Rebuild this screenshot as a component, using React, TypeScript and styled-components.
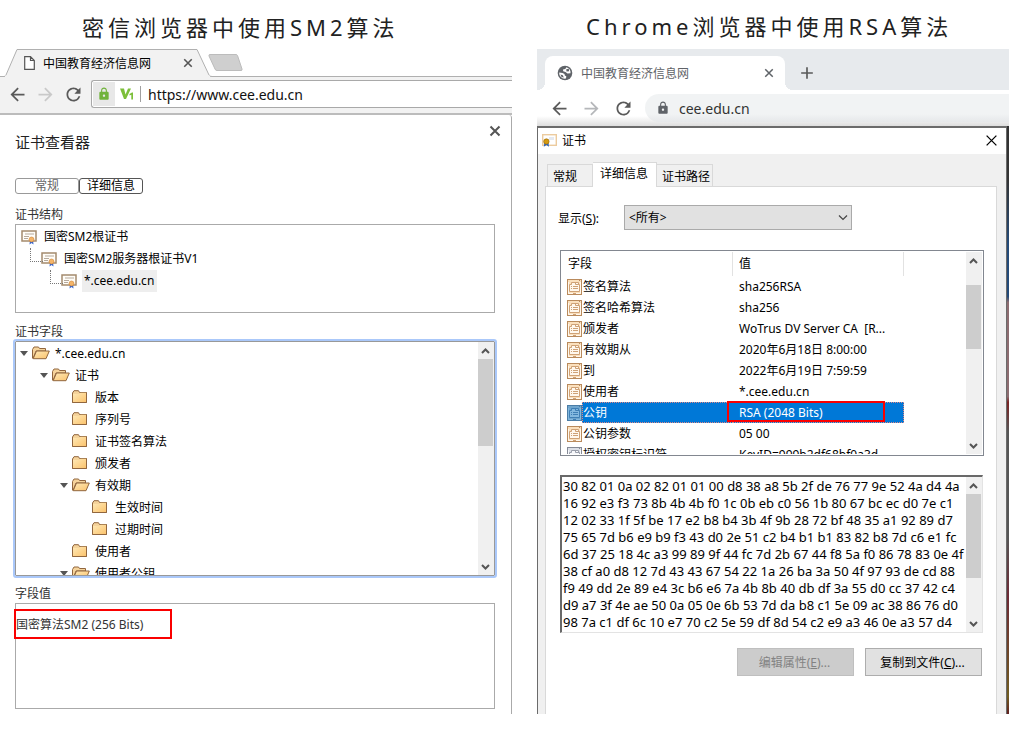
import React from "react";
import styled, { createGlobalStyle, css } from "styled-components";
import { MdArrowBack, MdArrowForward, MdRefresh, MdLock, MdAdd } from "react-icons/md";

const GlobalStyle = createGlobalStyle`
  * { box-sizing: border-box; }
  body { margin: 0; background: #fff; }
  body, button, input, select, textarea {
    font-family: "Noto Sans", "Noto Sans CJK SC", sans-serif;
    font-size: 12px;
    color: #000;
  }
  svg { display: block; flex: none; }
`;

const Page = styled.main`
  display: grid;
  grid-template-columns: minmax(0, 512fr) minmax(0, 472fr);
  column-gap: 25px;
  overflow: hidden;
`;

const Column = styled.section``;

const Heading = styled.h1<{ $indent: number; $top: number }>`
  margin: 0;
  height: 49px;
  padding: ${(p) => p.$top}px 0 0 ${(p) => p.$indent}px;
  font-size: 22px;
  line-height: 34px;
  font-weight: 400;
  letter-spacing: 4px;
  color: #222;
  white-space: nowrap;
`;

const IconButton = styled.button<{ $w?: number; $h?: number; $color?: string }>`
  display: flex;
  align-items: center;
  justify-content: center;
  flex: none;
  width: ${(p) => p.$w ?? 28}px;
  height: ${(p) => p.$h ?? 28}px;
  padding: 0;
  border: 0;
  background: none;
  color: ${(p) => p.$color ?? "#5a5a5a"};
`;

/* ---------- left browser ---------- */

const OldTabStrip = styled.div`
  display: flex;
  height: 28px;
  background: #fff;
  box-shadow: inset 0 -1px #b0b0b0;
`;

const OldTab = styled.div`
  position: relative;
  display: flex;
  align-items: center;
  width: 212px;
  padding: 0 14px 0 24px;
  font-size: 12px;
  & > span { flex: 1; margin-left: 8px; }
`;

const TabShape = styled.svg`
  position: absolute;
  inset: 0;
  z-index: -1;
`;

const OldTabWrap = styled.div`
  isolation: isolate;
  display: flex;
  margin-right: -4px;
`;

const OldToolbar = styled.div`
  display: flex;
  align-items: center;
  height: 38px;
  padding: 0 0 2px 3px;
  background: #f2f2f2;
  border-bottom: 2px solid #bcbcbc;
`;

const OldAddress = styled.label`
  display: flex;
  align-items: center;
  flex: 1;
  height: 28px;
  margin-left: 4px;
  padding-left: 1px;
  background: #fff;
  border: 1px solid #a9a9a9;
  border-right: 0;
  border-radius: 3px 0 0 3px;
`;

const LockBadge = styled.span`
  display: flex;
  align-items: center;
  justify-content: center;
  width: 22px;
  height: 24px;
  margin-right: 5px;
  background: #e8e8e8;
  color: #71b33c;
`;

const BadgeRule = styled.span`
  width: 1px;
  height: 16px;
  margin: 0 7px 0 6px;
  background: #a0a0a0;
`;

const AddressInput = styled.input<{ $size: number; $color: string }>`
  flex: 1;
  min-width: 0;
  padding: 0;
  border: 0;
  outline: 0;
  background: none;
  font-size: ${(p) => p.$size}px;
  color: ${(p) => p.$color};
`;

const Viewer = styled.div`
  min-height: 599px;
  padding: 10px 16px 5px 15px;
  border-right: 1px solid #aaa;
  border-top-right-radius: 3px;
`;

const ViewerHead = styled.header`
  display: flex;
  align-items: flex-start;
  justify-content: space-between;
  height: 53px;
  margin-right: -6px;
`;

const ViewerTitle = styled.h2`
  margin: 6px 0 0;
  font-size: 15px;
  line-height: 22px;
  font-weight: 400;
  color: #222;
`;

const PillTabs = styled.div`
  display: flex;
`;

const PillTab = styled.button<{ $active?: boolean }>`
  width: 64px;
  height: 16px;
  padding: 0;
  line-height: 14px;
  background: #fff;
  border: 1px solid ${(p) => (p.$active ? "#555" : "#999")};
  border-radius: 3px;
  color: ${(p) => (p.$active ? "#000" : "#666")};
`;

const FieldLabel = styled.h3<{ $gap: number }>`
  margin: ${(p) => p.$gap}px 0 0;
  padding-top: 1px;
  font-size: 12px;
  line-height: 20px;
  height: 20px;
  font-weight: 400;
  color: #333;
`;

const ChainBox = styled.ul`
  height: 89px;
  margin: 0;
  padding: 1px 0 0 5px;
  list-style: none;
  border: 1px solid #aaa;
`;

const ChainItem = styled.li<{ $level: number }>`
  position: relative;
  display: flex;
  align-items: center;
  height: 22px;
  margin-left: ${(p) => p.$level * 20}px;
  ${(p) =>
    p.$level > 0 &&
    css`
      &::before {
        content: "";
        position: absolute;
        left: -11px;
        top: 0;
        width: 12px;
        height: 13px;
        border: dotted #777;
        border-width: 0 0 1px 1px;
      }
    `}
`;

const ChainText = styled.span<{ $selected?: boolean }>`
  height: 22px;
  margin-left: 4px;
  padding: 0 3px 0 2px;
  line-height: 22px;
  background: ${(p) => (p.$selected ? "#eee" : "transparent")};
`;

const TreeBox = styled.div`
  display: flex;
  height: 235px;
  overflow: hidden;
  border: 1px solid #999;
  outline: 2px solid #aac8fa;
  border-radius: 1px;
`;

const TreeList = styled.ul`
  flex: 1;
  margin: 0;
  padding: 0 0 0 2px;
  list-style: none;
`;

const TreeItem = styled.li<{ $level: number }>`
  display: flex;
  align-items: center;
  height: 22px;
  margin-left: ${(p) => p.$level * 20}px;
`;

const Twisty = styled.span<{ $open: boolean }>`
  width: 7px;
  margin: 0 4px 0 2px;
  border: solid transparent;
  border-width: 5px 4px 0;
  border-top-color: ${(p) => (p.$open ? "#555" : "transparent")};
`;

const TreeText = styled.span`
  margin-left: 5px;
`;

const ValueWrap = styled.div`
  position: relative;
`;

const ValueArea = styled.textarea`
  display: block;
  width: 100%;
  height: 106px;
  padding: 11px 0 0;
  border: 1px solid #aaa;
  outline: 0;
  resize: none;
  line-height: 20px;
  color: #333;
`;

const RedFrame = styled.span<{ $left: number; $top: number; $w: number; $h: number }>`
  position: absolute;
  left: ${(p) => p.$left}px;
  top: ${(p) => p.$top}px;
  width: ${(p) => p.$w}px;
  height: ${(p) => p.$h}px;
  border: 2px solid #fa0000;
  pointer-events: none;
`;

/* ---------- scroll bar ---------- */

const ScrollTrack = styled.div`
  display: flex;
  flex-direction: column;
  flex: none;
  width: 16px;
  background: #f0f0f0;
`;

const ScrollThumb = styled.div<{ $offset: number; $h: number }>`
  width: 15px;
  height: ${(p) => p.$h}px;
  margin: ${(p) => p.$offset}px 0 auto;
  background: #cdcdcd;
`;

function Chevron({ up }: { up?: boolean }) {
  return (
    <svg width="15" height="17" viewBox="0 0 15 17" fill="none" stroke="#555" strokeWidth="2">
      <path d={up ? "M4 11 L7.500 7.500 L11 11" : "M4 7 L7.500 10.500 L11 7"} />
    </svg>
  );
}

function ScrollBar({ offset, size }: { offset: number; size: number }) {
  return (
    <ScrollTrack aria-hidden>
      <Chevron up />
      <ScrollThumb $offset={offset} $h={size} />
      <Chevron />
    </ScrollTrack>
  );
}

/* ---------- right browser ---------- */

const ChromeStrip = styled.div`
  display: flex;
  align-items: flex-end;
  height: 41px;
  padding-left: 8px;
  background: #e7eaed;
`;

const ChromeTab = styled.div`
  position: relative;
  display: flex;
  align-items: center;
  width: 240px;
  height: 34px;
  padding: 0 9px 0 12px;
  background: #fff;
  border-radius: 8px 8px 0 0;
  color: #5f6368;
  & > span { flex: 1; margin-left: 8px; }
  &::before, &::after {
    content: "";
    position: absolute;
    bottom: 0;
    width: 8px;
    height: 8px;
  }
  &::before {
    left: -8px;
    background: radial-gradient(circle at 0 0, transparent 8px, #fff 8px);
  }
  &::after {
    right: -8px;
    background: radial-gradient(circle at 100% 0, transparent 8px, #fff 8px);
  }
`;

const ChromeBar = styled.div`
  display: flex;
  align-items: center;
  height: 36px;
  padding-left: 6px;
  background: linear-gradient(#fff 26px, #dedede);
`;

const ChromeAddress = styled.label`
  display: flex;
  align-items: center;
  flex: 1;
  height: 28px;
  margin-left: 6px;
  padding-left: 11px;
  gap: 9px;
  background: linear-gradient(#f1f3f4 20px, #e6e8ea);
  border-radius: 14px 0 0 14px;
  color: #5f6368;
`;

const DialogBack = styled.div`
  padding-right: 2px;
  background: linear-gradient(#333 0 9%, #244a78 20%, #244a78 29%, #8c6c70 30%, #8c6c70 46%, #7a2424 47%, #555 52%, #555 70%, #6c2a35 80%, #705c20 97%, #602020);
`;

const Dialog = styled.div`
  height: 588px;
  border: solid #6b6b6b;
  border-width: 2px 1px 0;
  background: #f0f0f0;
`;

const DialogTitle = styled.header`
  display: flex;
  align-items: center;
  height: 26px;
  padding: 0 2px 2px 4px;
  background: #fff;
  & > span { flex: 1; margin-left: 5px; }
`;

const DialogTabs = styled.div`
  display: flex;
  align-items: flex-end;
  height: 32px;
  padding: 0 9px;
`;

const DialogTab = styled.button<{ $active?: boolean; $w: number }>`
  position: relative;
  width: ${(p) => p.$w}px;
  height: ${(p) => (p.$active ? 25 : 22)}px;
  margin-bottom: ${(p) => (p.$active ? -1 : 0)}px;
  padding: 0 0 ${(p) => (p.$active ? 4 : 0)}px ${(p) => (p.$active ? 7 : 5)}px;
  text-align: left;
  background: ${(p) => (p.$active ? "#fff" : "#f0f0f0")};
  border: 1px solid #d9d9d9;
  border-bottom: 0;
  & + & { border-left-width: ${(p) => (p.$active ? 1 : 0)}px; }
`;

const TabPage = styled.div`
  height: 528px;
  margin: 0 9px 0 7px;
  padding: 18px 12px 0 14px;
  background: #fff;
  border: 1px solid #d9d9d9;
  border-bottom: 0;
`;

const ShowRow = styled.div`
  display: flex;
  align-items: center;
  & > label { width: 66px; margin-left: -2px; }
`;

const SelectWrap = styled.div`
  position: relative;
  width: 228px;
  & > svg { position: absolute; right: 4px; top: 8px; pointer-events: none; }
`;

const Select = styled.select`
  appearance: none;
  width: 100%;
  height: 25px;
  padding: 0 4px;
  background: #e1e1e1;
  border: 1px solid #aaa;
  border-radius: 0;
`;

const ListBox = styled.div`
  display: flex;
  height: 206px;
  margin-top: 20px;
  padding: 1px;
  border: 1px solid #828790;
`;

const ListView = styled.div`
  flex: 1;
  overflow: hidden;
`;

const FieldTable = styled.table`
  width: 100%;
  table-layout: fixed;
  border-collapse: separate;
  border-spacing: 0;
  th {
    height: 24px;
    padding: 0 6px 2px;
    text-align: left;
    font-weight: 400;
    border-right: 1px solid #e2e2e2;
  }
  th:last-child { border-right: 0; }
  td {
    height: 21px;
    padding: 0;
    line-height: 20px;
    white-space: nowrap;
  }
`;

const NameCell = styled.div`
  display: flex;
  align-items: center;
  height: 21px;
  padding-left: 5px;
`;

const NameText = styled.span<{ $selected: boolean }>`
  flex: 1;
  height: 21px;
  padding-left: 1px;
  line-height: 21px;
  ${(p) => p.$selected && css`background: #0078d7; color: #fff; border: 1px dotted #d88; border-right: 0; padding-left: 0; line-height: 19px;`}
`;

const ValueCell = styled.div<{ $selected: boolean }>`
  position: relative;
  height: 21px;
  padding-left: 6px;
  line-height: 21px;
  ${(p) => p.$selected && css`background: #0078d7; color: #fff; border: 1px dotted #d88; border-left: 0; line-height: 19px;`}
`;

const HexBox = styled.div`
  display: flex;
  height: 158px;
  margin: 19px 1px 0 0;
  border: solid #e3e3e3;
  border-width: 2px 1px 1px 2px;
  border-top-color: #696969;
  border-left-color: #696969;
`;

const HexText = styled.textarea`
  flex: 1;
  min-width: 0;
  padding: 1px 0 0 1px;
  border: 0;
  outline: 0;
  resize: none;
  overflow: hidden;
  white-space: pre;
  font-size: 13px;
  line-height: 17px;
`;

const ButtonRow = styled.div`
  display: flex;
  justify-content: flex-end;
  gap: 11px;
  margin: 15px 2px 0 0;
`;

const PushButton = styled.button`
  width: 117px;
  height: 28px;
  padding: 0 2px 1px 0;
  background: #e1e1e1;
  border: 1px solid #adadad;
  &:disabled { background: #ccc; border-color: #bfbfbf; color: #838383; }
`;

/* ---------- drawings ---------- */

function Cross({ size, width, color }: { size: number; width: number; color: string }) {
  return (
    <svg width={size} height={size} viewBox="0 0 12 12" stroke={color} strokeWidth={width}>
      <path d="M1.500 1.500 L10.500 10.500 M10.500 1.500 L1.500 10.500" />
    </svg>
  );
}

function PageIcon() {
  return (
    <svg width="11" height="14" viewBox="0 0 11 14" fill="#fff" stroke="#555" strokeWidth="1.200">
      <path d="M0.700 0.700 H6.500 L10.300 4.500 V13.300 H0.700 Z M6.500 0.700 V4.500 H10.300" />
    </svg>
  );
}

function GlobeIcon() {
  return (
    <svg width="16" height="16" viewBox="0 0 16 16">
      <circle cx="8" cy="8" r="7.300" fill="#5f6368" />
      <path d="M9.500 2.300 L8.300 4 L6 4.500 L6.200 6.300 L8.500 7 L10.500 8.500 L13.500 8.200 C13.900 5.500 12.400 3.200 9.500 2.300 Z" fill="#fff" />
      <path d="M2.200 7.600 L5.500 8 L7.500 9 L7.800 10.500 L9.300 11.200 L9 13.600 C5 14.200 2 11.500 2.200 7.600 Z" fill="#fff" />
      <path d="M9.200 4.200 L11.800 3.800 L12.200 6.200 L9.500 6.400 Z M3.400 9.600 L5.800 10.200 L6.800 12.400 L4.600 12 Z" fill="#5f6368" />
    </svg>
  );
}

function BrandMark() {
  return (
    <svg width="14" height="12" viewBox="0 0 14 12" fill="#7cbf3a">
      <path d="M0 0.500 H4 L5.500 6.500 L8 0.500 H11 L6 11 H4 Z" />
      <path d="M9.500 6 L12 4.500 H13 V11.500 H11.300 V6.800 L9.500 7.500 Z" />
    </svg>
  );
}

function CertIcon() {
  return (
    <svg width="17" height="15" viewBox="0 0 17 15">
      <rect x="1" y="1" width="14" height="10" fill="#fffdf8" stroke="#a48a6d" strokeWidth="1.500" />
      <path d="M4 4 H13 M3 6.500 H8 M3 8.500 H7" stroke="#b5a99c" />
      <path d="M9 10 L8.500 14.500 L10.500 13 L12.500 14.500 L12 10" fill="#2f62d0" />
      <circle cx="10.500" cy="9.500" r="2.500" fill="#f4b56a" stroke="#cf8436" strokeWidth="0.600" />
    </svg>
  );
}

function DialogCertIcon() {
  return (
    <svg width="15" height="13" viewBox="0 0 15 13">
      <rect x="0.700" y="0.700" width="13.600" height="10.600" fill="#fff" stroke="#eccb9e" strokeWidth="1.400" />
      <rect x="7" y="3" width="5" height="3" fill="#e5e9f0" />
      <path d="M2.500 8 L1.800 12.800 L4.400 11 L7 12.800 L6.300 8" fill="#2463c6" />
      <circle cx="4.400" cy="7.500" r="2.700" fill="#d59a10" stroke="#936507" strokeWidth="0.600" />
    </svg>
  );
}

function FolderIcon({ open }: { open: boolean }) {
  return (
    <svg width="18" height="14" viewBox="0 0 18 14" stroke="#91663e" strokeLinejoin="round">
      <defs>
        <linearGradient id="folder" x1="0" y1="0" x2="1" y2="1">
          <stop offset="0" stopColor="#ffeab8" />
          <stop offset="1" stopColor="#fbc26b" />
        </linearGradient>
      </defs>
      {open ? (
        <>
          <path d="M0.500 12 V3.500 L2 1 H6.500 L7.500 2.500 H13.500 V5 H4 L1 12.500 Z" fill="#f5d39b" />
          <path d="M1.200 12.700 L4.500 5 H17.300 L14 12.700 Z" fill="url(#folder)" />
        </>
      ) : (
        <>
          <path d="M0.500 3 L2 0.700 H6.500 L7.500 2.500 H14.500 V12.500 H0.500 Z" fill="#f5d39b" />
          <path d="M0.500 4 H7 L8.500 2.800 H14.500 V12.500 H0.500 Z" fill="url(#folder)" stroke="none" />
          <path d="M0.500 3 V12.500 H14.500 V2.500" fill="none" />
        </>
      )}
    </svg>
  );
}

function FieldIcon({ tone }: { tone: "sand" | "blue" | "gray" }) {
  const [line, fill, paper, inner] = {
    sand: ["#b98a5c", "#fbe0bd", "#fff8ee", "#cfa277"],
    blue: ["#4b7da6", "#6fa5cd", "#83b8df", "#3f7fb5"],
    gray: ["#858a96", "#dcdfe6", "#f7f8fb", "#9a9fab"],
  }[tone];
  return (
    <svg width="15" height="16" viewBox="0 0 15 16">
      <rect x="0.500" y="0.500" width="14" height="15" fill={fill} stroke={line} />
      <path d="M1.500 3 V14.500 H13.500 V3" fill="none" stroke={paper} />
      <path d="M12 1.500 H13" stroke={line} />
      <path d="M2.500 5.500 H4.500 V3.500 H11.500 V5.500 H12.500 V12.500 H2.500 Z" fill={paper} stroke={inner} />
      <path d="M8.500 3.500 V5.500 H12 M4 7.500 H5 M6 7.500 H11 M4 9.500 H5 M6 9.500 H11 M6 14.500 H9" fill="none" stroke={inner} />
    </svg>
  );
}

/* ---------- data ---------- */

const treeRows: { level: number; text: string; open?: boolean }[] = [
  { level: 0, text: "*.cee.edu.cn", open: true },
  { level: 1, text: "证书", open: true },
  { level: 2, text: "版本" },
  { level: 2, text: "序列号" },
  { level: 2, text: "证书签名算法" },
  { level: 2, text: "颁发者" },
  { level: 2, text: "有效期", open: true },
  { level: 3, text: "生效时间" },
  { level: 3, text: "过期时间" },
  { level: 2, text: "使用者" },
  { level: 2, text: "使用者公钥", open: true },
];

const chain = ["国密SM2根证书", "国密SM2服务器根证书V1", "*.cee.edu.cn"];

const fields: [string, string][] = [
  ["签名算法", "sha256RSA"],
  ["签名哈希算法", "sha256"],
  ["颁发者", "WoTrus DV Server CA\u00a0 [R..."],
  ["有效期从", "2020年6月18日 8:00:00"],
  ["到", "2022年6月19日 7:59:59"],
  ["使用者", "*.cee.edu.cn"],
  ["公钥", "RSA (2048 Bits)"],
  ["公钥参数", "05 00"],
  ["授权密钥标识符", "KeyID=999b2df68bf0a3d"],
];

const publicKey = [
  "30 82 01 0a 02 82 01 01 00 d8 38 a8 5b 2f de 76 77 9e 52 4a d4 4a",
  "16 92 e3 f3 73 8b 4b 4b f0 1c 0b eb c0 56 1b 80 67 bc ec d0 7e c1",
  "12 02 33 1f 5f be 17 e2 b8 b4 3b 4f 9b 28 72 bf 48 35 a1 92 89 d7",
  "75 65 7d b6 e9 b9 f3 43 d0 2e 51 c2 b4 b1 b1 83 82 b8 7d c6 e1 fc",
  "6d 37 25 18 4c a3 99 89 9f 44 fc 7d 2b 67 44 f8 5a f0 86 78 83 0e 4f",
  "38 cf a0 d8 12 7d 43 43 67 54 22 1a 26 ba 3a 50 4f 97 93 de cd 88",
  "f9 49 dd 2e 89 e4 3c b6 e6 7a 4b 8b 40 db df 3a 55 d0 cc 37 42 c4",
  "d9 a7 3f 4e ae 50 0a 05 0e 6b 53 7d da b8 c1 5e 09 ac 38 86 76 d0",
  "98 7a c1 df 6c 10 e7 70 c2 5e 59 df 8d 54 c2 e9 a3 46 0e a3 57 d4",
].join("\n");

function NavButtons({ width, dim }: { width: number; dim: string }) {
  return (
    <>
      <IconButton aria-label="后退" $w={width}><MdArrowBack size={21} /></IconButton>
      <IconButton aria-label="前进" $w={width} $color={dim}><MdArrowForward size={21} /></IconButton>
      <IconButton aria-label="刷新" $w={width}><MdRefresh size={21} /></IconButton>
    </>
  );
}

function GmBrowser() {
  return (
    <Column>
      <Heading $indent={82} $top={10}>密信浏览器中使用SM2算法</Heading>
      <OldTabStrip>
        <OldTabWrap>
          <OldTab>
            <TabShape width="212" height="28" viewBox="0 0 212 28">
              <path d="M0 27.500 H4 Q5.500 27.500 6 26 L17 0.500 H197 L209 26 Q210 27.500 212 27.500 V28 H0 Z" fill="#f2f2f2" stroke="#b0b0b0" />
              <path d="M5 27.500 H210" stroke="#f2f2f2" strokeWidth="2" />
            </TabShape>
            <PageIcon />
            <span>中国教育经济信息网</span>
            <IconButton aria-label="关闭标签页" $w={20} $h={20}><Cross size={10} width={1.9} color="#555" /></IconButton>
          </OldTab>
        </OldTabWrap>
        <IconButton aria-label="新标签页" $w={35}>
          <svg width="35" height="18" viewBox="0 0 35 18">
            <path d="M2 0.500 H28 Q29 0.500 29.500 1.500 L34 15 Q34.500 16.500 33 16.500 H9 Q7.500 16.500 7 15 L1 2 Q0.500 0.500 2 0.500 Z" fill="#cfcfcf" stroke="#bcbcbc" />
          </svg>
        </IconButton>
      </OldTabStrip>
      <OldToolbar>
        <NavButtons width={28} dim="#c9c9c9" />
        <OldAddress>
          <LockBadge><MdLock size={14} /></LockBadge>
          <BrandMark />
          <BadgeRule />
          <AddressInput aria-label="地址" readOnly $size={14} $color="#111" value="https://www.cee.edu.cn" />
        </OldAddress>
      </OldToolbar>
      <Viewer>
        <ViewerHead>
          <ViewerTitle>证书查看器</ViewerTitle>
          <IconButton aria-label="关闭" $w={12} $h={12}><Cross size={12} width={2} color="#555" /></IconButton>
        </ViewerHead>
        <PillTabs>
          <PillTab>常规</PillTab>
          <PillTab $active>详细信息</PillTab>
        </PillTabs>
        <FieldLabel $gap={10}>证书结构</FieldLabel>
        <ChainBox>
          {chain.map((text, i) => (
            <ChainItem key={text} $level={i}>
              <CertIcon />
              <ChainText $selected={i === 2}>{text}</ChainText>
            </ChainItem>
          ))}
        </ChainBox>
        <FieldLabel $gap={8}>证书字段</FieldLabel>
        <TreeBox>
          <TreeList>
            {treeRows.map((row) => (
              <TreeItem key={row.text} $level={row.level}>
                <Twisty $open={!!row.open} />
                <FolderIcon open={!!row.open} />
                <TreeText>{row.text}</TreeText>
              </TreeItem>
            ))}
          </TreeList>
          <ScrollBar offset={0} size={87} />
        </TreeBox>
        <FieldLabel $gap={7}>字段值</FieldLabel>
        <ValueWrap>
          <ValueArea aria-label="字段值" readOnly value="国密算法SM2 (256 Bits)" />
          <RedFrame $left={-1} $top={6} $w={158} $h={30} />
        </ValueWrap>
      </Viewer>
    </Column>
  );
}

function ChromeBrowser() {
  return (
    <Column>
      <Heading $indent={49} $top={9}>Chrome浏览器中使用RSA算法</Heading>
      <ChromeStrip>
        <ChromeTab>
          <GlobeIcon />
          <span>中国教育经济信息网</span>
          <IconButton aria-label="关闭标签页" $w={14} $h={14}><Cross size={10} width={1.8} color="#5f6368" /></IconButton>
        </ChromeTab>
        <IconButton aria-label="新标签页" $w={44} $h={34}><MdAdd size={20} /></IconButton>
      </ChromeStrip>
      <ChromeBar>
        <NavButtons width={32} dim="#b5b7ba" />
        <ChromeAddress>
          <MdLock size={14} />
          <AddressInput aria-label="地址" readOnly $size={14} $color="#333" value="cee.edu.cn" />
        </ChromeAddress>
      </ChromeBar>
      <DialogBack>
        <Dialog>
          <DialogTitle>
            <DialogCertIcon />
            <span>证书</span>
            <IconButton aria-label="关闭" $w={26} $h={24}><Cross size={13} width={1.2} color="#000" /></IconButton>
          </DialogTitle>
          <DialogTabs>
            <DialogTab $w={46}>常规</DialogTab>
            <DialogTab $active $w={64}>详细信息</DialogTab>
            <DialogTab $w={56}>证书路径</DialogTab>
          </DialogTabs>
          <TabPage>
            <ShowRow>
              <label htmlFor="show">显示(<u>S</u>):</label>
              <SelectWrap>
                <Select id="show" defaultValue="all">
                  <option value="all">&lt;所有&gt;</option>
                </Select>
                <svg width="10" height="9" viewBox="0 0 10 9" fill="none" stroke="#444" strokeWidth="1.200">
                  <path d="M1 2.500 L5 6.500 L9 2.500" />
                </svg>
              </SelectWrap>
            </ShowRow>
            <ListBox>
              <ListView>
                <FieldTable>
                  <colgroup>
                    <col width="171" />
                    <col width="171" />
                    <col />
                  </colgroup>
                  <thead>
                    <tr><th>字段</th><th>值</th><th aria-label="其他" /></tr>
                  </thead>
                  <tbody>
                    {fields.map(([name, value], i) => (
                      <tr key={name}>
                        <td>
                          <NameCell>
                            <FieldIcon tone={i === 6 ? "blue" : i === 8 ? "gray" : "sand"} />
                            <NameText $selected={i === 6}>{name}</NameText>
                          </NameCell>
                        </td>
                        <td>
                          <ValueCell $selected={i === 6}>
                            {value}
                            {i === 6 && <RedFrame $left={-6} $top={-2} $w={158} $h={21} />}
                          </ValueCell>
                        </td>
                        <td />
                      </tr>
                    ))}
                  </tbody>
                </FieldTable>
              </ListView>
              <ScrollBar offset={16} size={64} />
            </ListBox>
            <HexBox>
              <HexText aria-label="公钥" readOnly value={publicKey} />
              <ScrollBar offset={0} size={84} />
            </HexBox>
            <ButtonRow>
              <PushButton disabled>编辑属性(<u>E</u>)...</PushButton>
              <PushButton>复制到文件(<u>C</u>)...</PushButton>
            </ButtonRow>
          </TabPage>
        </Dialog>
      </DialogBack>
    </Column>
  );
}

export default function App() {
  return (
    <>
      <GlobalStyle />
      <Page>
        <GmBrowser />
        <ChromeBrowser />
      </Page>
    </>
  );
}
